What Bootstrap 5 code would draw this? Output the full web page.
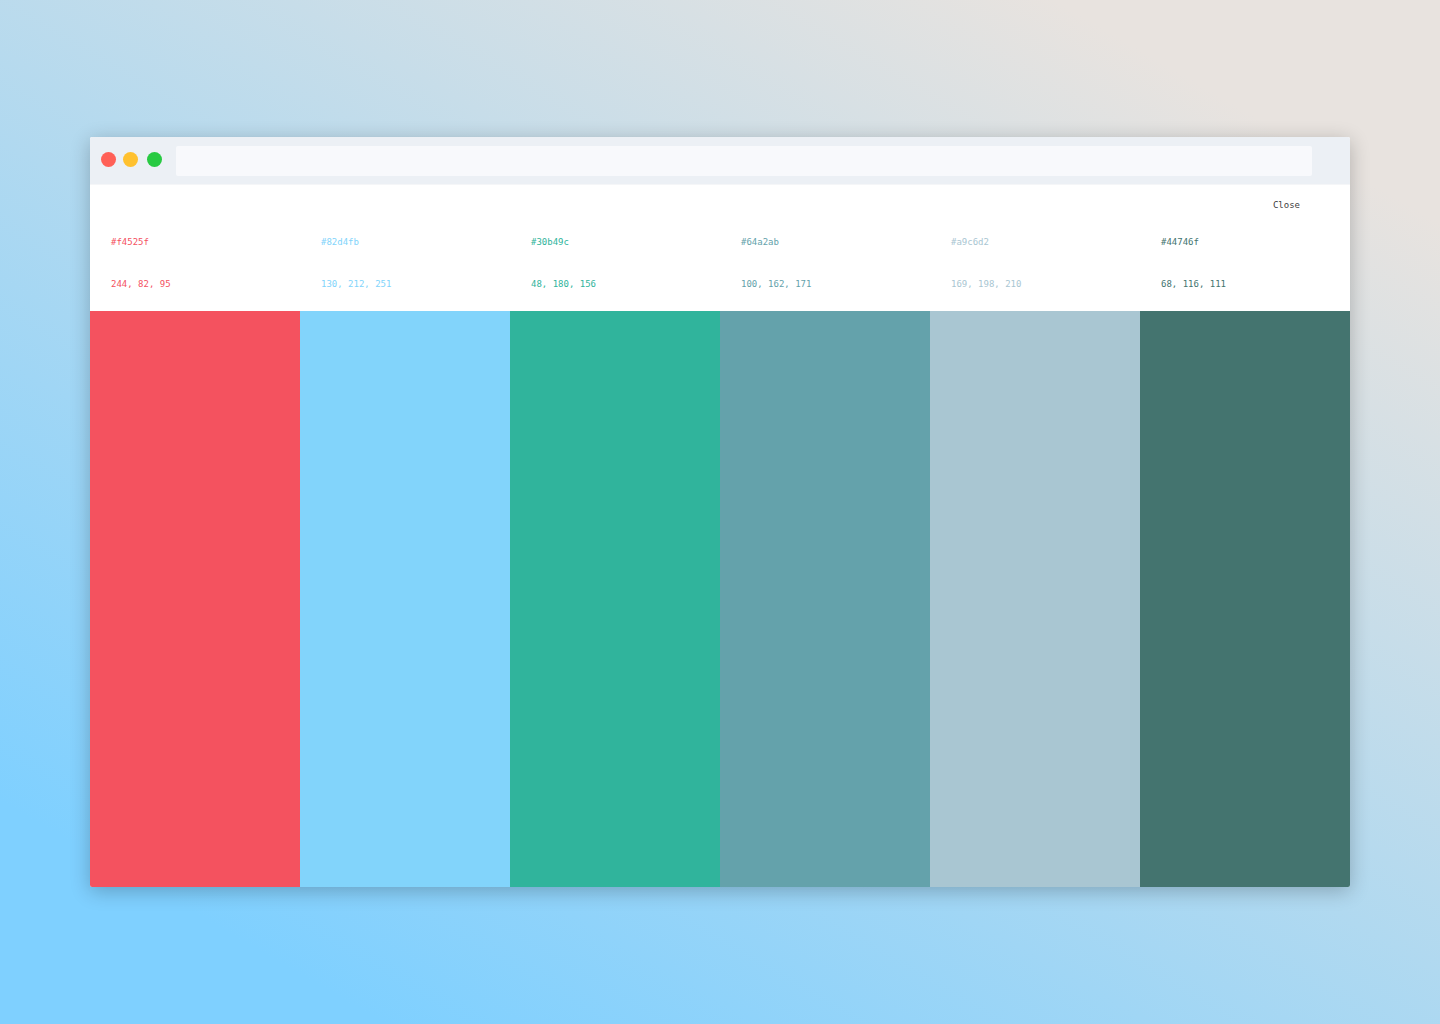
<!DOCTYPE html>
<html lang="en">
<head>
<meta charset="utf-8">
<meta name="viewport" content="width=device-width, initial-scale=1">
<title>Palette</title>
<link href="https://cdn.jsdelivr.net/npm/bootstrap@5.3.0/dist/css/bootstrap.min.css" rel="stylesheet">
<style>
body { background: linear-gradient(30deg, #7fd0ff 12%, #e8e3df 88%) no-repeat; font-family: "DejaVu Sans Mono", monospace; font-size: 9px; }
.browser { width: 87.5%; border-radius: 2px; box-shadow: 0 4px 20px rgba(0, 0, 0, .24); }
.browser-bar { background: #ecf0f5; padding: 9px 38px 8px 11px; gap: 14px; border-bottom: 1px solid #f5f6f8; }
.address { height: 30px; background: #f8f9fc; border-radius: 2px; }
.close-row { padding: 0 50px 1px 0; }
.close-link { font-size: 9px; line-height: 40px; color: #404040; }
.values { line-height: 32px; gap: 10px; padding: 0 21px 11px; }
.tile { min-height: 576px; }
.c-red { color: #f4525f; } .c-sky { color: #82d4fb; } .c-green { color: #30b49c; }
.c-teal { color: #64a2ab; } .c-mist { color: #a9c6d2; } .c-pine { color: #44746f; }
.tile { background: currentColor; }
</style>
<script src="https://cdn.jsdelivr.net/npm/bootstrap@5.3.0/dist/js/bootstrap.bundle.min.js"></script>
</head>
<body class="min-vh-100 d-flex align-items-center justify-content-center">
<main class="browser bg-white overflow-hidden">
  <header class="browser-bar d-flex">
    <svg class="flex-shrink-0" width="61" height="30" aria-hidden="true">
      <circle cx="7.5" cy="13.5" r="7.5" fill="#ff6057"/>
      <circle cx="29.5" cy="13.5" r="7.5" fill="#ffc12f"/>
      <circle cx="53.5" cy="13.5" r="7.5" fill="#28ca42"/>
    </svg>
    <input class="address flex-grow-1 border-0 p-0" type="text" aria-label="Address">
  </header>
  <div class="close-row d-flex justify-content-end">
    <button type="button" class="close-link border-0 bg-transparent p-0">Close</button>
  </div>
  <div class="row row-cols-6 g-0">
    <section class="col c-red"><div class="values d-flex flex-column"><span>#f4525f</span><span>244, 82, 95</span></div><div class="tile"></div></section>
    <section class="col c-sky"><div class="values d-flex flex-column"><span>#82d4fb</span><span>130, 212, 251</span></div><div class="tile"></div></section>
    <section class="col c-green"><div class="values d-flex flex-column"><span>#30b49c</span><span>48, 180, 156</span></div><div class="tile"></div></section>
    <section class="col c-teal"><div class="values d-flex flex-column"><span>#64a2ab</span><span>100, 162, 171</span></div><div class="tile"></div></section>
    <section class="col c-mist"><div class="values d-flex flex-column"><span>#a9c6d2</span><span>169, 198, 210</span></div><div class="tile"></div></section>
    <section class="col c-pine"><div class="values d-flex flex-column"><span>#44746f</span><span>68, 116, 111</span></div><div class="tile"></div></section>
  </div>
</main>
</body>
</html>
